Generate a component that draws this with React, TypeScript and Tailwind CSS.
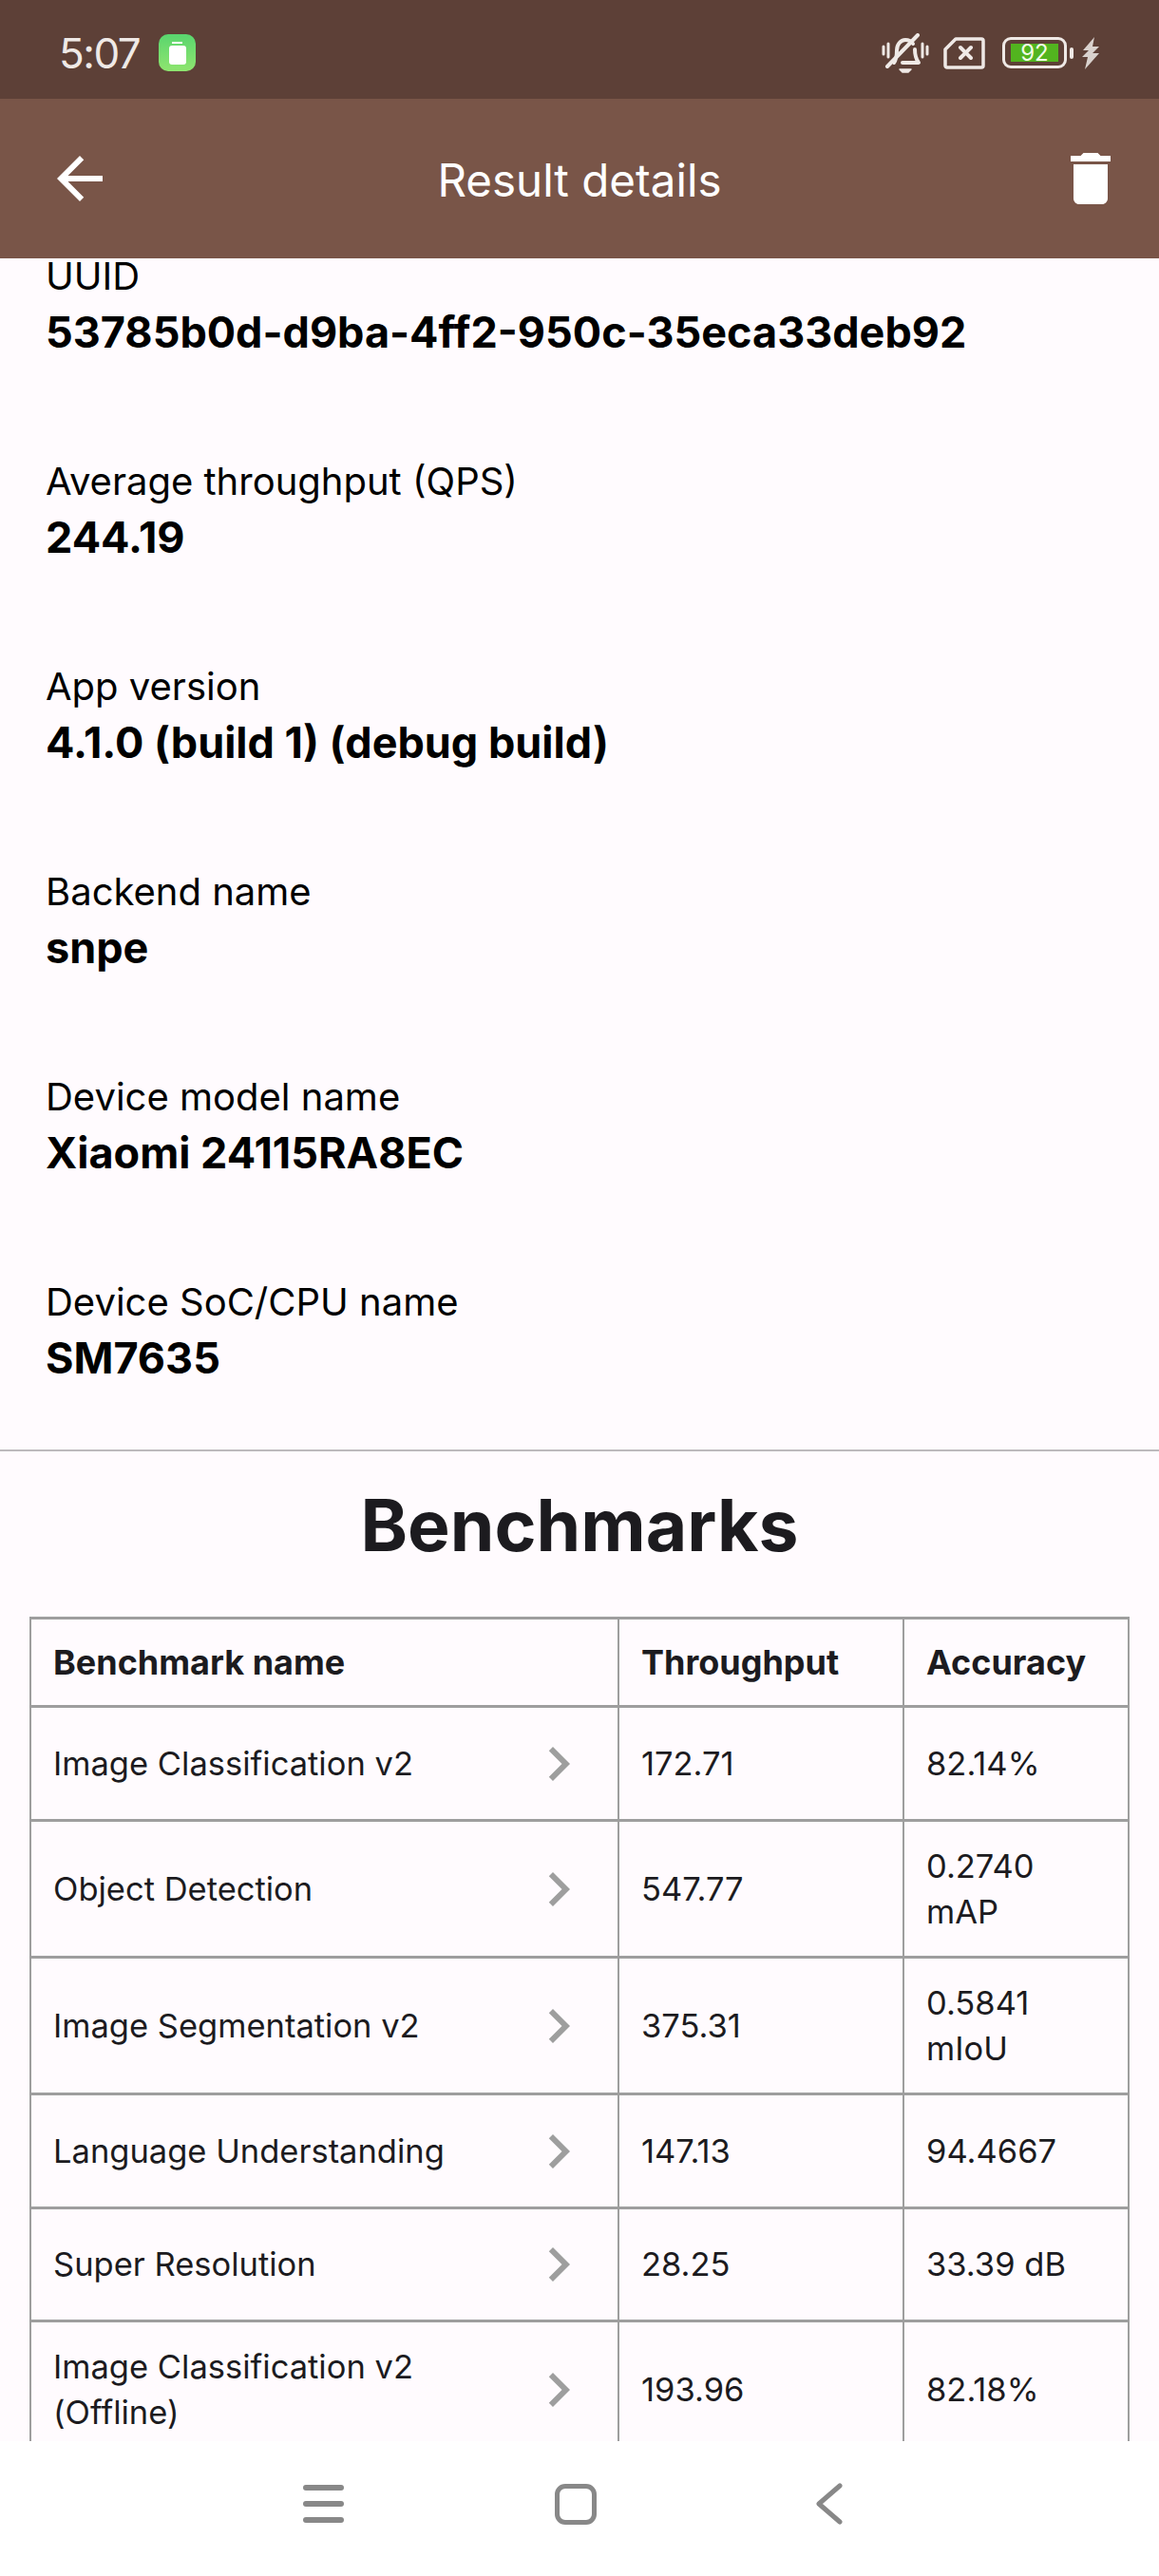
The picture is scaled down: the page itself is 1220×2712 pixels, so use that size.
import { ReactNode } from "react";

const details = [
  { label: "UUID", value: "53785b0d-d9ba-4ff2-950c-35eca33deb92" },
  { label: "Average throughput (QPS)", value: "244.19" },
  { label: "App version", value: "4.1.0 (build 1) (debug build)" },
  { label: "Backend name", value: "snpe" },
  { label: "Device model name", value: "Xiaomi 24115RA8EC" },
  { label: "Device SoC/CPU name", value: "SM7635" },
];

const benchmarks: { name: ReactNode; throughput: string; accuracy: ReactNode; rowClass: string }[] = [
  { name: "Image Classification v2", throughput: "172.71", accuracy: "82.14%", rowClass: "h-[120px]" },
  { name: "Object Detection", throughput: "547.77", accuracy: "0.2740 mAP", rowClass: "h-[144px]" },
  { name: "Image Segmentation v2", throughput: "375.31", accuracy: "0.5841 mIoU", rowClass: "h-[144px]" },
  { name: "Language Understanding", throughput: "147.13", accuracy: "94.4667", rowClass: "h-[120px]" },
  { name: "Super Resolution", throughput: "28.25", accuracy: "33.39 dB", rowClass: "h-[119px]" },
  { name: "Image Classification v2 (Offline)", throughput: "193.96", accuracy: "82.18%", rowClass: "h-[144px]" },
];

function StatusIcons() {
  return (
    <div className="flex items-center">
      {/* muted bell */}
      <svg width="50" height="42" viewBox="0 0 50 42" fill="none" stroke="#efe9e6" strokeWidth="4" strokeLinecap="round" strokeLinejoin="round">
        <path d="M2 14v8M7 11v14M43 11v14M48 14v8" strokeWidth="3" />
        <path d="M13 31c3-4 3-8 3-13 0-6 4-11 9-11 3 0 6 1 8 4M35 17c0 6 1 10 4 14H22" />
        <path d="M38 2 6 35" />
        <path d="M19 38h12l-3 3h-6z" fill="#efe9e6" strokeWidth="1.5" />
      </svg>
      {/* no sim */}
      <svg className="ml-[15px]" width="44" height="34" viewBox="0 0 44 34" fill="none" stroke="#efe9e6" strokeLinejoin="round">
        <path d="M13 2h27a2 2 0 0 1 2 2v26a2 2 0 0 1-2 2H4a2 2 0 0 1-2-2V13z" strokeWidth="3.5" />
        <path d="M18 11l11 11M29 11 18 22" strokeWidth="4" strokeLinecap="round" />
      </svg>
      {/* battery */}
      <div className="ml-[18px] flex items-center">
        <div className="flex h-[33px] w-[68px] items-center justify-center rounded-[9px] border-[3px] border-[#efe9e6]">
          <div className="flex h-[19px] w-[50px] items-center justify-center bg-[#52b41f] font-['Inter',sans-serif] text-[24px] leading-none text-[#f2fbe8]">
            92
          </div>
        </div>
        <div className="ml-[3px] h-[12px] w-[4px] rounded-[2px] bg-[#efe9e6]" />
      </div>
      {/* charging bolt */}
      <svg className="ml-[8px]" width="20" height="34" viewBox="0 0 20 34" fill="#d9d2ce">
        <path d="M14 0 2 14h6L1 21h6L4 34 19 17h-7l7-7h-7z" />
      </svg>
    </div>
  );
}

function Chevron() {
  return (
    <svg className="absolute right-[26px] top-1/2 -translate-y-1/2" width="72" height="72" viewBox="0 0 24 24" fill="#9e9e9e">
      <path d="M10 6 8.59 7.41 13.17 12l-4.58 4.59L10 18l6-6z" />
    </svg>
  );
}

export default function App() {
  return (
    <div className="flex h-[2712px] w-[1220px] flex-col overflow-hidden bg-white font-['Inter',sans-serif]">
      {/* Status bar */}
      <div className="flex h-[104px] shrink-0 items-center justify-between bg-[#5d4037] pl-[62px] pr-[62px] pt-[7px]">
        <div className="flex items-center">
          <span className="w-[105px] text-[44px] leading-none tracking-[-1.5px] text-[#efe9e6]">5:07</span>
          <div className="flex h-[39px] w-[39px] flex-col items-center justify-center rounded-[10px] bg-gradient-to-b from-[#58d56e] to-[#8ee56f]">
            <div className="h-[2px] w-[11px] bg-white" />
            <div className="mt-[2px] h-[20px] w-[18px] rounded-[3px] bg-white" />
          </div>
        </div>
        <StatusIcons />
      </div>

      {/* App bar */}
      <div className="flex h-[168px] shrink-0 items-center justify-between bg-[#795548] pl-[48px] pr-[36px]">
        <svg width="72" height="72" viewBox="0 0 24 24" fill="#ffffff">
          <path d="M20 11H7.83l5.59-5.59L12 4l-8 8 8 8 1.41-1.41L7.83 13H20v-2z" />
        </svg>
        <h1 className="pr-[12px] pt-[3px] text-[47.5px] font-normal leading-none text-white">Result details</h1>
        <svg width="72" height="72" viewBox="0 0 24 24" fill="#ffffff">
          <path d="M6 19c0 1.1.9 2 2 2h8c1.1 0 2-.9 2-2V7H6v12zM19 4h-3.5l-1-1h-5l-1 1H5v2h14V4z" />
        </svg>
      </div>

      {/* Scrolled content */}
      <main className="min-h-0 flex-1 overflow-hidden bg-[#fffbfe]">
        <div className="-mt-[11px]">
          <div className="flex flex-col gap-[98px] pl-[48px]">
            {details.map((d) => (
              <div key={d.label}>
                <div className="text-[40px] leading-[59px] text-black">{d.label}</div>
                <div className="text-[45px] font-bold leading-[59px] text-black">{d.value}</div>
              </div>
            ))}
          </div>

          <div className="mt-[67px] h-[2px] bg-[#bdbabd]" />

          <h2 className="mt-[23px] text-center text-[75px] font-bold leading-[110px] text-[#1c1b1f]">Benchmarks</h2>

          <div className="mx-[31px] mt-[41px] border-x-2 border-t-[3px] border-[#9e9e9e] text-[34.5px] text-[#1c1b1f]">
            <div className="grid h-[93px] grid-cols-[617px_300px_1fr] border-b-[3px] border-[#9e9e9e] text-[36px] font-bold">
              <div className="flex items-center px-[23px]">Benchmark name</div>
              <div className="flex items-center border-l-2 border-[#9e9e9e] px-[23px]">Throughput</div>
              <div className="flex items-center border-l-2 border-[#9e9e9e] px-[23px]">Accuracy</div>
            </div>
            {benchmarks.map((b, i) => (
              <div key={i} className={`grid grid-cols-[617px_300px_1fr] border-b-[3px] border-[#9e9e9e] leading-[48px] ${b.rowClass}`}>
                <div className="relative flex items-center pl-[23px] pr-[110px]">
                  <span>{b.name}</span>
                  <Chevron />
                </div>
                <div className="flex items-center border-l-2 border-[#9e9e9e] px-[23px]">{b.throughput}</div>
                <div className="flex items-center border-l-2 border-[#9e9e9e] pl-[23px] pr-[40px]">
                  <span>{b.accuracy}</span>
                </div>
              </div>
            ))}
          </div>
        </div>
      </main>

      {/* Navigation bar */}
      <div className="flex h-[142px] shrink-0 items-center bg-white pb-[10px] pl-[319px]">
        <div className="flex w-[43px] flex-col gap-[11px]">
          <div className="h-[6px] rounded-full bg-[#888888]" />
          <div className="h-[6px] rounded-full bg-[#888888]" />
          <div className="h-[6px] rounded-full bg-[#888888]" />
        </div>
        <div className="ml-[222px] h-[43px] w-[44px] rounded-[11px] border-[5px] border-[#888888]" />
        <svg className="ml-[230px]" width="29" height="44" viewBox="0 0 29 44" fill="none" stroke="#888888" strokeWidth="5" strokeLinecap="round" strokeLinejoin="round">
          <path d="M26 3 4 22l22 19" />
        </svg>
      </div>
    </div>
  );
}
